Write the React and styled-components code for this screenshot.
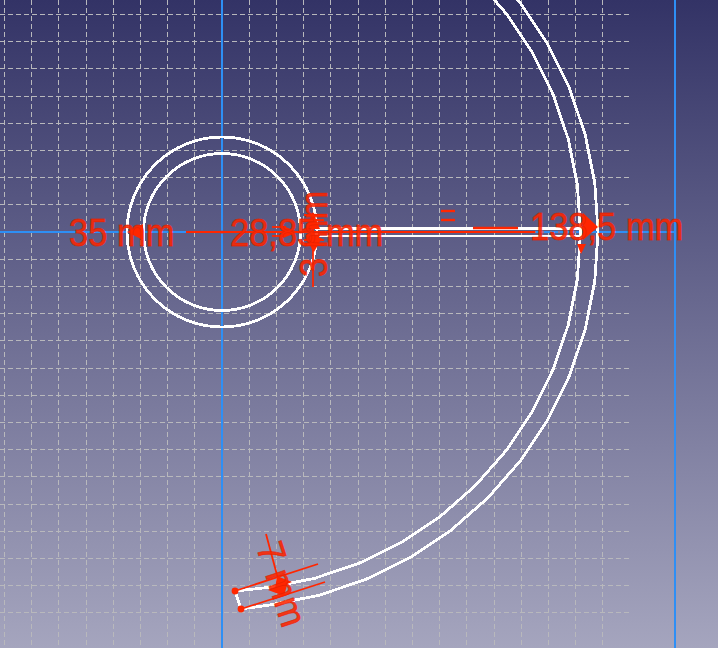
import React from "react";
import styled, { createGlobalStyle } from "styled-components";

const GlobalStyle = createGlobalStyle`
  html, body {
    margin: 0;
    padding: 0;
    background: #333366;
  }
`;

const Viewport = styled.div`
  width: 718px;
  height: 648px;
  overflow: hidden;
  background: linear-gradient(180deg, #333366 0%, #a5a5be 100%);
`;

const Sketch = styled.svg`
  display: block;
  width: 718px;
  height: 648px;
`;

const GridLine = styled.line`
  stroke: #b8b8bc;
  stroke-width: 1;
  stroke-dasharray: 5 3;
  shape-rendering: crispEdges;
`;

const Axis = styled.line`
  stroke: #2e8ff5;
  stroke-width: 2;
  shape-rendering: crispEdges;
`;

const Edge = styled.polyline`
  fill: none;
  stroke: #ffffff;
  stroke-width: 2.8;
  stroke-linejoin: round;
  shape-rendering: crispEdges;
`;

const Ring = styled.circle`
  fill: none;
  stroke: #ffffff;
  stroke-width: 2.8;
  shape-rendering: crispEdges;
`;

const DimLine = styled.line`
  stroke: #ff2600;
  stroke-width: ${(props) => props.$weight || 1.8};
`;

const DottedLine = styled.line`
  stroke: #ff5a30;
  stroke-width: 1;
  stroke-dasharray: 2 6;
`;

const Arrow = styled.polygon`
  fill: #ff2600;
`;

const Dot = styled.circle`
  fill: #ff2600;
`;

const Label = styled.text`
  fill: #ff2600;
  fill-opacity: 0.9;
  stroke: #e02000;
  stroke-width: 0.8;
  stroke-opacity: 0.7;
  font-family: "Liberation Sans", Arial, sans-serif;
  font-size: 34.5px;
`;

const Center = { x: 222, y: 232 };
const INNER_R = 358.5;
const OUTER_R = 376;
const STEP = 7.5;

const gridX = Array.from({ length: 24 }, (_, i) => 222 + (i - 8) * 27.2).filter(
  (x) => x < 630
);
const gridY = Array.from({ length: 23 }, (_, i) => 232 + (i - 8) * 27.2);

// the big arc is a coarse polygon in the reference, so keep the facets
const arcPoints = (r, endPoint) => {
  const pts = [];
  for (let a = -60; a <= 82.5; a += STEP) {
    const rad = (a * Math.PI) / 180;
    pts.push(`${Center.x + r * Math.cos(rad)},${Center.y + r * Math.sin(rad)}`);
  }
  pts.push(endPoint);
  return pts.join(" ");
};

const dimLines = [
  [186, 232, 535, 232],
  [473, 228, 518, 228, 2.4],
  [313, 213, 313, 287],
  [235, 591, 318, 564],
  [241, 609, 325, 582],
  [266, 534, 281, 590],
  [441, 211, 455, 211, 2.4],
  [441, 220, 455, 220, 2.4],
  [272, 227, 286, 227],
  [272, 236, 286, 236],
  [304, 215, 324, 215, 2],
  [304, 220, 324, 220, 2],
  [304, 240, 324, 240, 2],
  [304, 245, 324, 245, 2],
];

const arrows = [
  "127,232 143,224 143,240",
  "298,232 283,226 283,238",
  "598,227 583,213 583,240",
  "581,254 577,244 586,244",
  "313,212 306,229 320,229",
  "313,252 306,235 320,235",
  "322,238 314,252 313,238",
  "277,576 292,582 275,589",
  "284,596 268,590 288,582",
];

// glyphs in the reference are a bit taller than Liberation at this width
const labels = [
  { text: "35 mm", x: 69, y: 246, rotate: 0 },
  { text: "28,85 mm", x: 230, y: 246, rotate: 0 },
  { text: "138,5 mm", x: 530, y: 240, rotate: 0 },
  { text: "3 mm", x: 326.5, y: 277, rotate: -90 },
  { text: "7 mm", x: 256, y: 547, rotate: 72 },
];

export default function App() {
  return (
    <>
      <GlobalStyle />
      <Viewport>
        <Sketch viewBox="0 0 718 648">
          {gridX.map((x) => (
            <GridLine key={x} x1={x} y1={0} x2={x} y2={648} />
          ))}
          {gridY
            .filter((y) => y < 620)
            .map((y) => (
              <GridLine key={y} x1={0} y1={y} x2={630} y2={y} />
            ))}

          <Axis x1={222} y1={0} x2={222} y2={648} />
          <Axis x1={675} y1={0} x2={675} y2={648} />
          <Axis x1={0} y1={232} x2={675} y2={232} />

          <Ring cx={Center.x} cy={Center.y} r={95} />
          <Ring cx={Center.x} cy={Center.y} r={78.5} />
          <Edge points={arcPoints(INNER_R, "235,591")} />
          <Edge points={arcPoints(OUTER_R, "241,609")} />
          <Edge points="235,591 241,609" />
          <Edge points="316,228.5 580,228.5" />
          <Edge points="316,236 580,236" />
          <DottedLine x1={318} y1={232} x2={580} y2={232} />

          {dimLines.map(([x1, y1, x2, y2, weight]) => (
            <DimLine
              key={`${x1}-${y1}-${x2}-${y2}`}
              x1={x1}
              y1={y1}
              x2={x2}
              y2={y2}
              $weight={weight}
            />
          ))}
          {arrows.map((points) => (
            <Arrow key={points} points={points} />
          ))}
          <Dot cx={235} cy={591} r={3.4} />
          <Dot cx={241} cy={609} r={3.4} />
          <Dot cx={222} cy={232} r={1.6} />

          {labels.map(({ text, x, y, rotate }) => (
            <Label
              key={text}
              transform={`translate(${x} ${y}) rotate(${rotate}) scale(1 1.1)`}
            >
              {text}
            </Label>
          ))}
        </Sketch>
      </Viewport>
    </>
  );
}
